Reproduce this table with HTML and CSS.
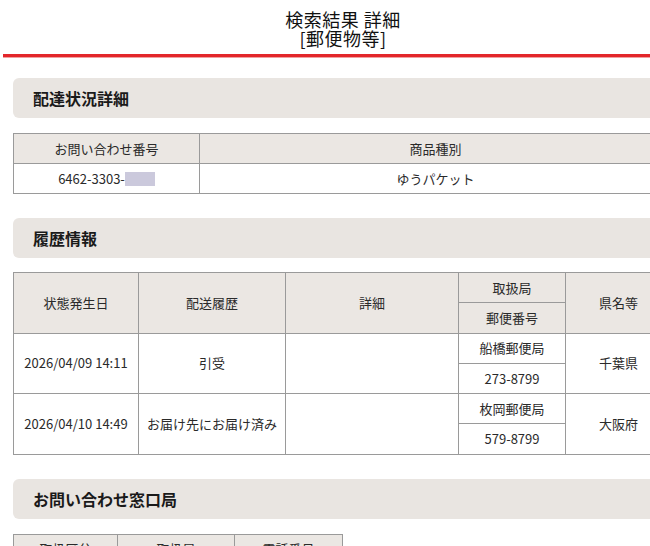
FILE: index.html
```html
<!DOCTYPE html>
<html lang="ja">
<head>
<meta charset="utf-8">
<title>検索結果 詳細</title>
<link rel="stylesheet" href="styles.css">
</head>
<body>
<div class="page">
  <header class="title-bar">
    <h1 class="title">検索結果 詳細<br>[郵便物等]</h1>
  </header>
  <main class="content">
    <h2 class="section-head">配達状況詳細</h2>
    <table class="grid grid-1">
      <colgroup><col class="c1-1"><col class="c1-2"></colgroup>
      <tr><th>お問い合わせ番号</th><th>商品種別</th></tr>
      <tr><td>6462-3303-<span class="mask"></span></td><td>ゆうパケット</td></tr>
    </table>

    <h2 class="section-head sec-2">履歴情報</h2>
    <table class="grid grid-2">
      <colgroup><col class="c2-1"><col class="c2-2"><col class="c2-3"><col class="c2-4"><col class="c2-5"></colgroup>
      <tr><th rowspan="2">状態発生日</th><th rowspan="2">配送履歴</th><th rowspan="2">詳細</th><th>取扱局</th><th rowspan="2">県名等</th></tr>
      <tr><th>郵便番号</th></tr>
      <tr><td rowspan="2" class="date">2026/04/09 14:11</td><td rowspan="2">引受</td><td rowspan="2"></td><td>船橋郵便局</td><td rowspan="2">千葉県</td></tr>
      <tr><td>273-8799</td></tr>
      <tr><td rowspan="2" class="date">2026/04/10 14:49</td><td rowspan="2">お届け先にお届け済み</td><td rowspan="2"></td><td>枚岡郵便局</td><td rowspan="2">大阪府</td></tr>
      <tr><td>579-8799</td></tr>
    </table>

    <h2 class="section-head sec-3">お問い合わせ窓口局</h2>
    <table class="grid grid-3">
      <colgroup><col class="c3-1"><col class="c3-2"><col class="c3-3"></colgroup>
      <tr><th>取扱区分</th><th>取扱局</th><th>電話番号</th></tr>
      <tr><td>配達</td><td>枚岡郵便局</td><td>0570-943-386</td></tr>
    </table>
  </main>
</div>
</body>
</html>
```
FILE: styles.css
```css
html, body {
  margin: 0;
  padding: 0;
  overflow: hidden;
  background: #ffffff;
}
body {
  font-family: "Noto Sans CJK JP", "Noto Sans", sans-serif;
  color: #222222;
}
.page {
  width: 680px;
  margin-left: 3px;
}
.title-bar {
  padding: 10px 0 6px;
  border-bottom: 3px solid #e3262b;
  box-shadow: 0 1px 0 #f2a0a0;
}
.title {
  margin: 0;
  text-align: center;
  font-size: 18px;
  line-height: 19px;
  font-weight: 400;
  letter-spacing: 0.5px;
  color: #111111;
}
.content {
  padding: 0 12px 0 10px;
}
.section-head {
  margin: 21px 0 0;
  height: 40px;
  display: flex;
  align-items: center;
  padding-left: 20px;
  background: #e9e5e1;
  border-radius: 6px;
  font-size: 16px;
  font-weight: 700;
  color: #1a1a1a;
  box-sizing: border-box;
}
.sec-2, .sec-3 { margin-top: 24px; }
.grid {
  border-collapse: collapse;
  table-layout: fixed;
  margin-top: 15px;
  font-size: 13px;
  color: #2a2a2a;
}
.sec-2 + .grid { margin-top: 14px; }
.grid th, .grid td {
  border: 1px solid #9a9a9a;
  height: 29px;
  padding: 0;
  text-align: center;
  vertical-align: middle;
  line-height: 16px;
  font-weight: 400;
}
.grid-2 th, .grid-2 td { height: 29.3px; }
.grid th { background: #ebe7e3; }
.grid td { background: #ffffff; }
.grid-1 { width: 659px; }
.c1-1 { width: 186px; }
.c1-2 { width: 472px; }
.grid-2 { width: 659px; }
.c2-1 { width: 125px; }
.c2-2 { width: 147px; }
.c2-3 { width: 173px; }
.c2-4 { width: 107px; }
.c2-5 { width: 106px; }
.grid-3 { width: 330px; }
.c3-1 { width: 104px; }
.c3-2 { width: 117px; }
.c3-3 { width: 108px; }
.mask {
  display: inline-block;
  width: 30px;
  height: 14px;
  vertical-align: -2px;
  background: #cbc9dc;
}
```
